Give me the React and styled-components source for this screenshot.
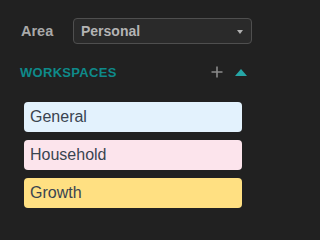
import React from 'react'
import styled, { createGlobalStyle } from 'styled-components'

const Global = createGlobalStyle`
  html, body {
    margin: 0;
    padding: 0;
    background: #212121;
  }
`

const Panel = styled.div`
  display: flex;
  flex-direction: column;
  width: 264px;
  padding: 18px 12px 0 21px;
  box-sizing: border-box;
  font-family: "Liberation Sans", Arial, sans-serif;
`

const Row = styled.div`
  display: flex;
  align-items: center;
  gap: 20px;
`

const Label = styled.span`
  font-size: 14.5px;
  font-weight: 700;
  color: #a9a9a9;
  width: 32px;
`

const Select = styled.div`
  flex: 1;
  box-sizing: border-box;
  height: 26px;
  display: flex;
  align-items: center;
  justify-content: space-between;
  padding: 0 8px 0 7px;
  background: #2a2a2a;
  border: 1px solid #4f4f4f;
  border-radius: 4px;
  font-size: 14px;
  font-weight: 700;
  color: #b4b4b4;
`

const Caret = styled.span`
  width: 0;
  height: 0;
  border-left: 3px solid transparent;
  border-right: 3px solid transparent;
  border-top: 4px solid #b0b0b0;
  margin-top: 1px;
`

const Header = styled.div`
  display: flex;
  align-items: center;
  height: 20px;
  margin-top: 18px;
  padding-right: 5px;
  margin-left: -1px;
`

const Title = styled.span`
  flex: 1;
  font-size: 13px;
  font-weight: 700;
  letter-spacing: 0.3px;
  color: #0e8a8a;
`

const Actions = styled.div`
  display: flex;
  align-items: center;
  gap: 12px;
`

const List = styled.div`
  display: flex;
  flex-direction: column;
  gap: 8px;
  margin-top: 20px;
  padding-left: 3px;
  width: 218px;
`

const Card = styled.div`
  height: 30px;
  box-sizing: border-box;
  display: flex;
  align-items: center;
  padding-left: 6px;
  border-radius: 4px;
  background: ${p => p.bg};
  color: #3a4450;
  font-size: 16px;
`

const workspaces = [
  { name: 'General', bg: '#e3f2fd' },
  { name: 'Household', bg: '#fce4ec' },
  { name: 'Growth', bg: '#ffe082' },
]

export default function App() {
  return (
    <>
      <Global />
      <Panel>
        <Row>
          <Label>Area</Label>
          <Select>
            <span>Personal</span>
            <Caret />
          </Select>
        </Row>
        <Header>
          <Title>WORKSPACES</Title>
          <Actions>
            <svg width="12" height="12" viewBox="0 0 12 12">
              <path d="M6 0.5V11.5M0.5 6H11.5" stroke="#8a8a8a" strokeWidth="1.6" />
            </svg>
            <svg width="12" height="7" viewBox="0 0 12 7">
              <path d="M6 0L12 7H0Z" fill="#26a6a6" />
            </svg>
          </Actions>
        </Header>
        <List>
          {workspaces.map(w => (
            <Card key={w.name} bg={w.bg}>{w.name}</Card>
          ))}
        </List>
      </Panel>
    </>
  )
}
